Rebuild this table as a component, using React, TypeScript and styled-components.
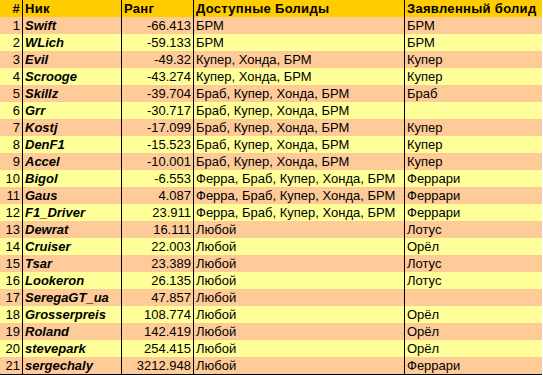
import React, { FC } from 'react';
import styled, { createGlobalStyle } from 'styled-components';

type Row = {
  nick: string;
  rank: string;
  cars: string;
  chosen: string;
};

const ALL = 'Любой';
const BRM = 'БРМ';
const KHB = 'Купер, Хонда, БРМ';
const BKHB = 'Браб, Купер, Хонда, БРМ';
const FBKHB = 'Ферра, Браб, Купер, Хонда, БРМ';

const rows: Row[] = [
  { nick: 'Swift', rank: '-66.413', cars: BRM, chosen: 'БРМ' },
  { nick: 'WLich', rank: '-59.133', cars: BRM, chosen: 'БРМ' },
  { nick: 'Evil', rank: '-49.32', cars: KHB, chosen: 'Купер' },
  { nick: 'Scrooge', rank: '-43.274', cars: KHB, chosen: 'Купер' },
  { nick: 'Skillz', rank: '-39.704', cars: BKHB, chosen: 'Браб' },
  { nick: 'Grr', rank: '-30.717', cars: BKHB, chosen: '' },
  { nick: 'Kostj', rank: '-17.099', cars: BKHB, chosen: 'Купер' },
  { nick: 'DenF1', rank: '-15.523', cars: BKHB, chosen: 'Купер' },
  { nick: 'Accel', rank: '-10.001', cars: BKHB, chosen: 'Купер' },
  { nick: 'Bigol', rank: '-6.553', cars: FBKHB, chosen: 'Феррари' },
  { nick: 'Gaus', rank: '4.087', cars: FBKHB, chosen: 'Феррари' },
  { nick: 'F1_Driver', rank: '23.911', cars: FBKHB, chosen: 'Феррари' },
  { nick: 'Dewrat', rank: '16.111', cars: ALL, chosen: 'Лотус' },
  { nick: 'Cruiser', rank: '22.003', cars: ALL, chosen: 'Орёл' },
  { nick: 'Tsar', rank: '23.389', cars: ALL, chosen: 'Лотус' },
  { nick: 'Lookeron', rank: '26.135', cars: ALL, chosen: 'Лотус' },
  { nick: 'SeregaGT_ua', rank: '47.857', cars: ALL, chosen: '' },
  { nick: 'Grosserpreis', rank: '108.774', cars: ALL, chosen: 'Орёл' },
  { nick: 'Roland', rank: '142.419', cars: ALL, chosen: 'Орёл' },
  { nick: 'stevepark', rank: '254.415', cars: ALL, chosen: 'Орёл' },
  { nick: 'sergechaly', rank: '3212.948', cars: ALL, chosen: 'Феррари' },
];

const App: FC = () => (
  <>
    <GlobalStyle />
    <Table>
      <HeadCell $align="right" $first>#</HeadCell>
      <HeadCell>Ник</HeadCell>
      <HeadCell>Ранг</HeadCell>
      <HeadCell>Доступные Болиды</HeadCell>
      <HeadCell>Заявленный болид</HeadCell>
      {rows.map((row, i) => {
        const odd = i % 2 === 0;
        return (
          <React.Fragment key={row.nick}>
            <Cell $odd={odd} $align="right" $first>
              {i + 1}
            </Cell>
            <NickCell $odd={odd}>{row.nick}</NickCell>
            <Cell $odd={odd} $align="right">
              {row.rank}
            </Cell>
            <Cell $odd={odd}>{row.cars}</Cell>
            <Cell $odd={odd}>{row.chosen}</Cell>
          </React.Fragment>
        );
      })}
    </Table>
  </>
);

export default App;

const GlobalStyle = createGlobalStyle`
  body {
    margin: 0;
    background: #ffffff;
    font-family: 'Liberation Sans', Arial, sans-serif;
  }
`;

const Table = styled.div`
  display: grid;
  grid-template-columns: 22px 99px 72px 211px 138px;
  grid-auto-rows: 17px;
  width: 542px;
  border-bottom: 1px solid #000;
`;

type CellProps = {
  $align?: 'left' | 'right';
  $first?: boolean;
};

const BaseCell = styled.div<CellProps>`
  display: flex;
  align-items: center;
  justify-content: ${(p) => (p.$align === 'right' ? 'flex-end' : 'flex-start')};
  padding: 0 2px;
  border-left: ${(p) => (p.$first ? 'none' : '1px solid #000')};
  font-size: 13px;
  line-height: 17px;
  color: #000;
  white-space: nowrap;
  overflow: hidden;
`;

const HeadCell = styled(BaseCell)`
  background: #ffcc00;
  font-weight: 700;
  letter-spacing: 0.3px;
`;

const Cell = styled(BaseCell)<{ $odd: boolean }>`
  background-color: ${(p) => (p.$odd ? '#ffcc99' : '#ffff99')};
  background-image: ${(p) =>
    p.$odd ? 'radial-gradient(circle at 1px 1px, #f7bf8f 0.5px, transparent 0.8px)' : 'none'};
  background-size: 4px 4px;
`;

const NickCell = styled(Cell)`
  font-weight: 700;
  font-style: italic;
`;
